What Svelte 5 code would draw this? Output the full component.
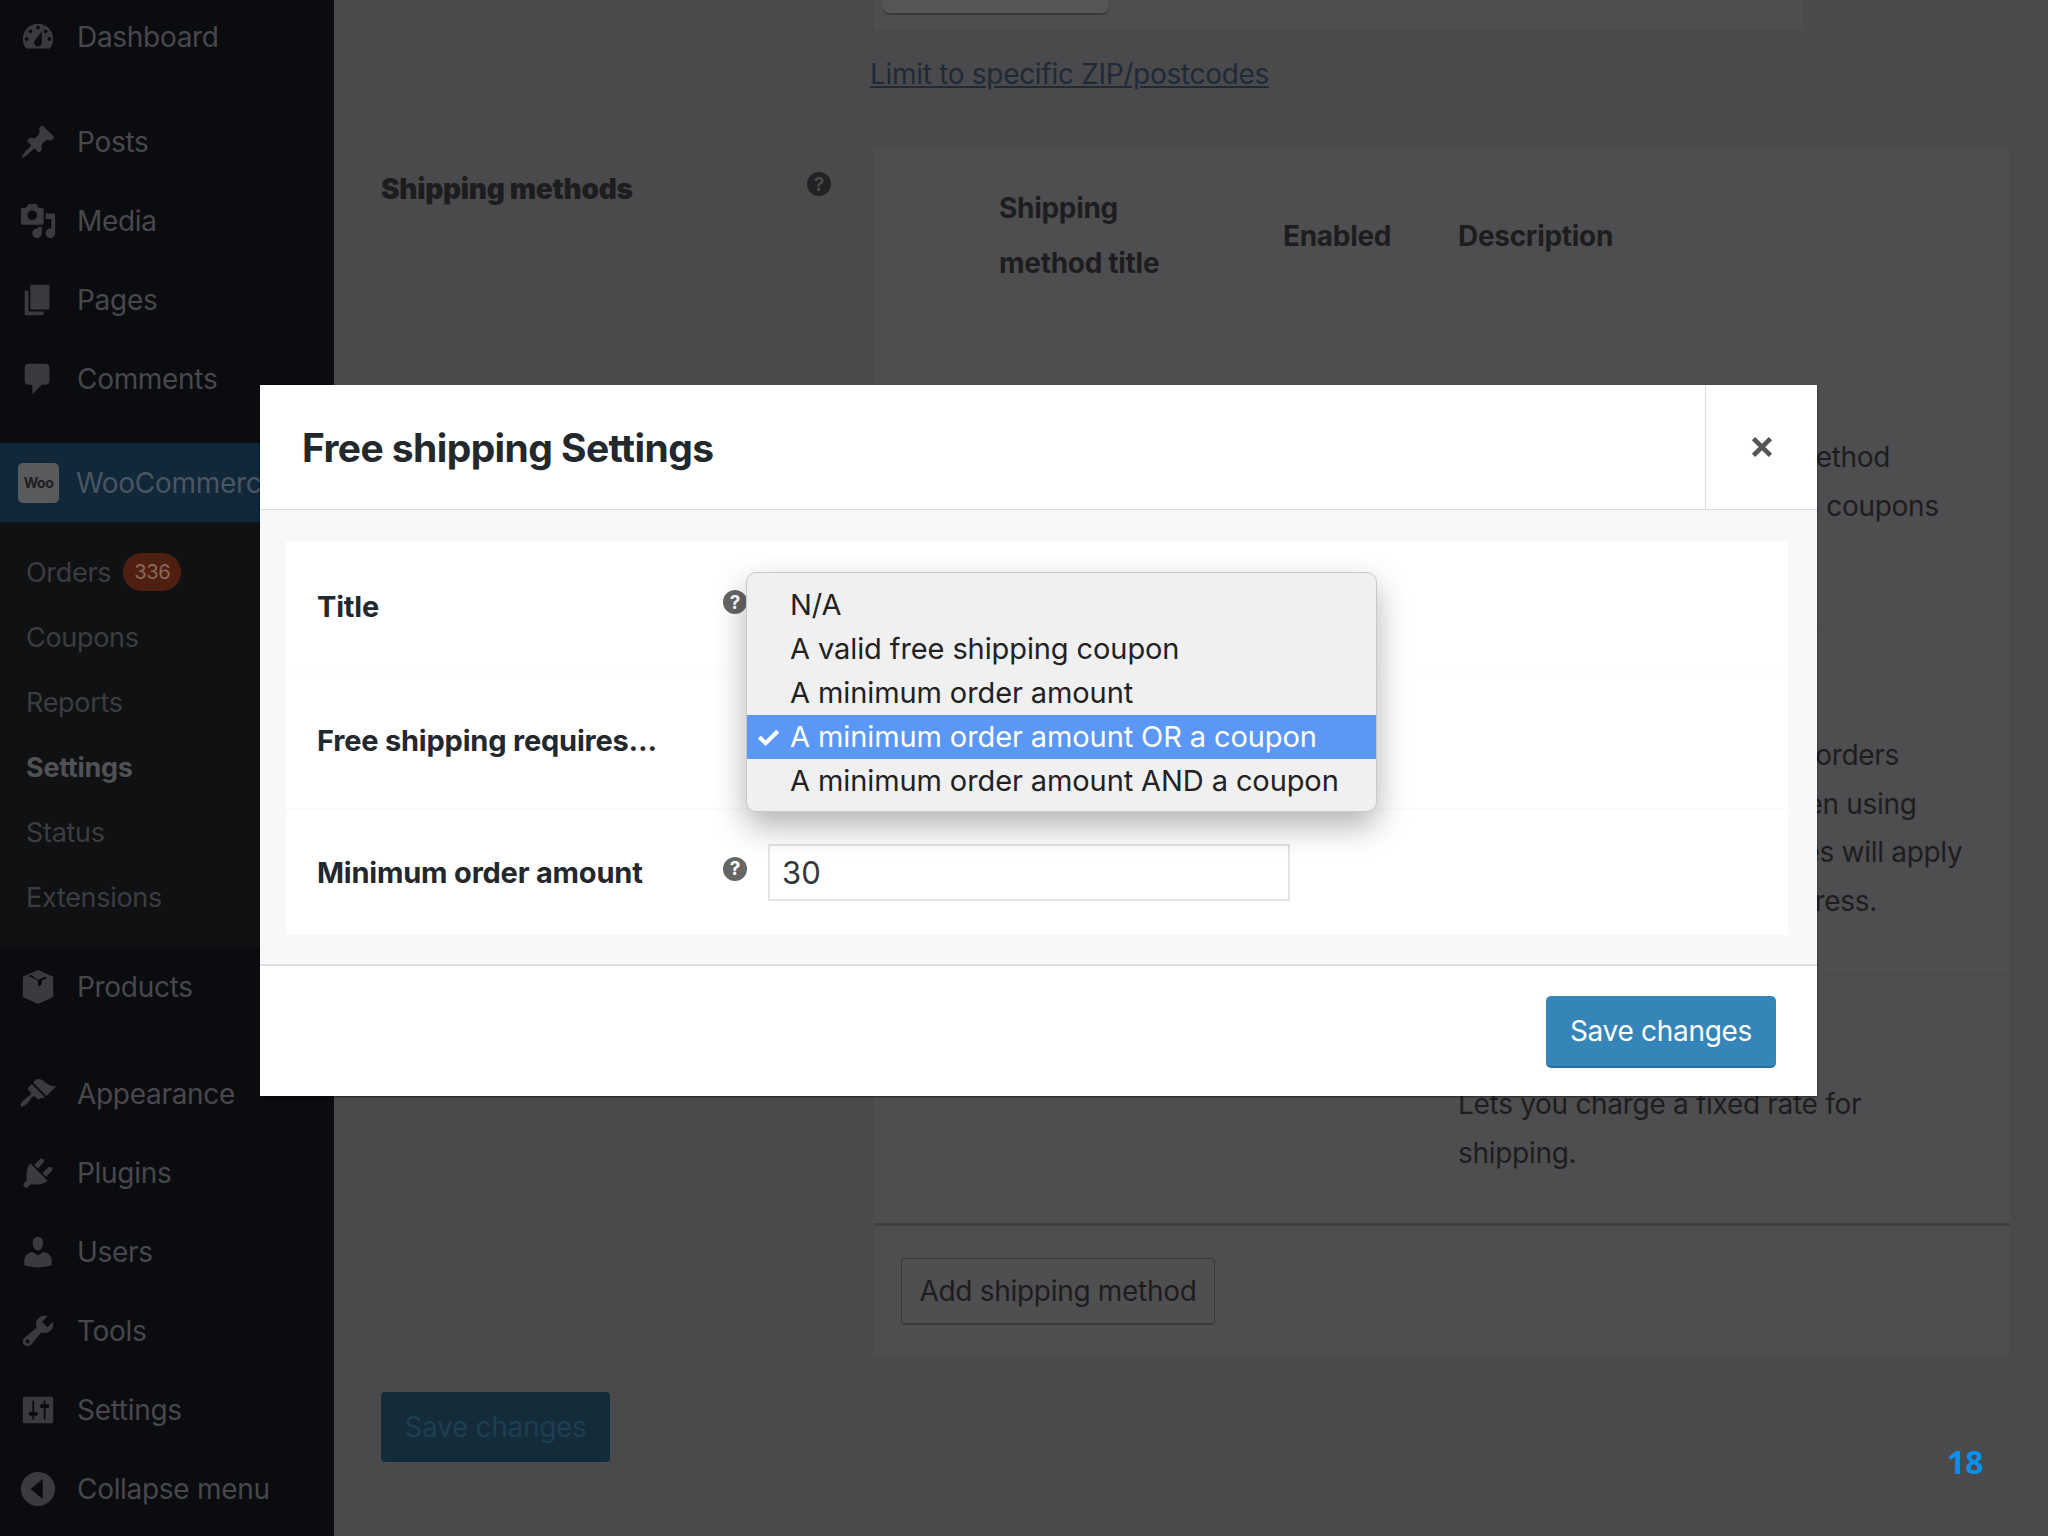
<script lang="ts">
  const icons: Record<string, string> = {
    dashboard:
      "M3.76 16h12.48c1.1-1.37 1.76-3.11 1.76-5 0-4.42-3.58-8-8-8s-8 3.58-8 8c0 1.89.66 3.63 1.76 5zM10 4c.55 0 1 .45 1 1s-.45 1-1 1-1-.45-1-1 .45-1 1-1zM6 6c.55 0 1 .45 1 1s-.45 1-1 1-1-.45-1-1 .45-1 1-1zm8 0c.55 0 1 .45 1 1s-.45 1-1 1-1-.45-1-1 .45-1 1-1zm-5.37 5.55L12 7v6c0 1.1-.9 2-2 2s-2-.9-2-2c0-.57.24-1.08.63-1.45zM4 10c.55 0 1 .45 1 1s-.45 1-1 1-1-.45-1-1 .45-1 1-1zm12 0c.55 0 1 .45 1 1s-.45 1-1 1-1-.45-1-1 .45-1 1-1z",
    posts:
      "M10.44 3.02l1.82-1.82 6.36 6.35-1.83 1.82c-1.05-.68-2.48-.57-3.41.36l-.75.75c-.92.93-1.04 2.35-.35 3.41l-1.83 1.82-2.41-2.41-2.8 2.79c-.42.42-3.38 2.71-3.8 2.29s1.86-3.39 2.28-3.81l2.79-2.79L4.1 9.36l1.83-1.82c1.05.69 2.48.57 3.4-.36l.75-.75c.93-.92 1.05-2.35.36-3.41z",
    media:
      "M13 11V4c0-.55-.45-1-1-1h-1.67L9 1H5L3.67 3H2c-.55 0-1 .45-1 1v7c0 .55.45 1 1 1h10c.55 0 1-.45 1-1zM7 4.5c1.38 0 2.5 1.12 2.5 2.5S8.38 9.5 7 9.5 4.5 8.38 4.5 7 5.62 4.5 7 4.5zM14 6h5v10.5c0 1.38-1.12 2.5-2.5 2.5S14 17.88 14 16.5s1.12-2.5 2.5-2.5c.17 0 .34.02.5.05V9h-3V6zm-4 8.05V13h2v3.5c0 1.38-1.12 2.5-2.5 2.5S7 17.88 7 16.5 8.12 14 9.5 14c.17 0 .34.02.5.05z",
    pages: "M6 15V2h10v13H6zm-1 1h8v2H3V5h2v11z",
    comments:
      "M5 2h9c1.1 0 2 .9 2 2v7c0 1.1-.9 2-2 2h-2l-5 5v-5H5c-1.1 0-2-.9-2-2V4c0-1.1.9-2 2-2z",
    products:
      "M10 1l8 3.6v10.6L10 19l-8-3.8V4.6zM6.2 3.6L5 4.2l5 2.4v3.2l2-1V6.6l2.9-1.4-1.2-.6L10 6.2z",
    appearance:
      "M14.48 11.06L7.41 3.99l1.5-1.5c.5-.56 2.3-.47 3.51.32 1.21.8 1.43 1.28 2.91 2.1 1.18.64 2.45 1.26 4.45.85zm-.71.71L6.7 4.7 4.93 6.47c-.39.39-.39 1.02 0 1.41l1.06 1.06c.39.39.39 1.03 0 1.42-.6.6-1.43 1.11-2.21 1.69-.35.26-.7.53-1.01.84-1.34 1.34-2.37 2.96-1.76 3.57.61.61 2.23-.42 3.58-1.77.31-.31.58-.66.84-1.01.58-.78 1.09-1.61 1.69-2.21.39-.39 1.02-.39 1.41 0l1.06 1.06c.39.39 1.02.39 1.41 0z",
    plugins:
      "M13.11 4.36L9.87 7.6 8 5.73l3.24-3.24c.35-.34 1.05-.2 1.56.32.52.51.66 1.21.31 1.55zm-8 1.77l.91-1.12 9.01 9.01-1.19.84c-.71.71-2.63 1.16-3.82 1.16H6.14L4.9 17.26c-.59.59-1.54.59-2.12 0-.59-.58-.59-1.53 0-2.12l1.24-1.24v-3.88c0-1.13.4-3.19 1.09-3.89zm7.26 3.97l3.24-3.24c.34-.35 1.04-.21 1.55.31.52.51.66 1.21.31 1.55l-3.24 3.25z",
    users:
      "M10 9.25c-2.27 0-2.73-3.44-2.73-3.44C7 4.02 7.82 2 9.97 2c2.16 0 2.98 2.02 2.71 3.81 0 0-.41 3.44-2.68 3.44zm0 2.57L12.72 10c2.39 0 4.52 2.33 4.52 4.53v2.49s-3.65 1.13-7.24 1.13c-3.65 0-7.24-1.13-7.24-1.13v-2.49c0-2.25 1.94-4.48 4.47-4.48z",
    tools:
      "M16.68 9.77c-1.34 1.34-3.3 1.67-4.95.99l-5.41 6.52c-.99.99-2.59.99-3.58 0s-.99-2.59 0-3.57l6.52-5.42c-.68-1.65-.35-3.61.99-4.95 1.28-1.28 3.12-1.62 4.72-1.06l-2.89 2.89 2.82 2.82 2.86-2.87c.53 1.58.18 3.39-1.08 4.65zM3.81 16.21c.4.39 1.04.39 1.43 0 .4-.4.4-1.04 0-1.43-.39-.4-1.03-.4-1.43 0-.39.39-.39 1.03 0 1.43z",
    settings:
      "M18 16V4c0-.55-.45-1-1-1H3c-.55 0-1 .45-1 1v12c0 .55.45 1 1 1h14c.55 0 1-.45 1-1zM8 11h1c.55 0 1 .45 1 1s-.45 1-1 1H8v1.5c0 .28-.22.5-.5.5s-.5-.22-.5-.5V13H6c-.55 0-1-.45-1-1s.45-1 1-1h1V5.5c0-.28.22-.5.5-.5s.5.22.5.5V11zm5-2h-1c-.55 0-1-.45-1-1s.45-1 1-1h1V5.5c0-.28.22-.5.5-.5s.5.22.5.5V7h1c.55 0 1 .45 1 1s-.45 1-1 1h-1v5.5c0 .28-.22.5-.5.5s-.5-.22-.5-.5V9z",
    collapse:
      "M10 1a9 9 0 1 1 0 18 9 9 0 0 1 0-18zm2.5 3.8L6 10l6.5 5.2z",
  };

  const topItems = [{ label: "Dashboard", icon: "dashboard" }];
  const contentItems = [
    { label: "Posts", icon: "posts" },
    { label: "Media", icon: "media" },
    { label: "Pages", icon: "pages" },
    { label: "Comments", icon: "comments" },
  ];
  const subItems = ["Coupons", "Reports", "Settings", "Status", "Extensions"];
  const adminItems = [
    { label: "Appearance", icon: "appearance" },
    { label: "Plugins", icon: "plugins" },
    { label: "Users", icon: "users" },
    { label: "Tools", icon: "tools" },
    { label: "Settings", icon: "settings" },
    { label: "Collapse menu", icon: "collapse" },
  ];
  const options = [
    "N/A",
    "A valid free shipping coupon",
    "A minimum order amount",
    "A minimum order amount OR a coupon",
    "A minimum order amount AND a coupon",
  ];
  const selected = 3;
</script>

{#snippet menuItem(item: { label: string; icon: string })}
  <div class="menu-item">
    <svg class="menu-icon" viewBox="0 0 20 20"><path fill-rule="evenodd" d={icons[item.icon]} /></svg>
    <span>{item.label}</span>
  </div>
{/snippet}

{#snippet help()}
  <span class="help">?</span>
{/snippet}

<div class="screen">
  <aside class="sidebar">
    <div class="group-first">
      {#each topItems as item}{@render menuItem(item)}{/each}
    </div>
    <div class="group">
      {#each contentItems as item}{@render menuItem(item)}{/each}
    </div>

    <div class="woo-row">
      <span class="woo-logo">Woo</span>
      <span>WooCommerce</span>
    </div>
    <div class="submenu">
      <div class="sub-item">Orders <span class="badge">336</span></div>
      {#each subItems as sub}
        <div class="sub-item" class:current={sub === "Settings"}>{sub}</div>
      {/each}
    </div>

    {@render menuItem({ label: "Products", icon: "products" })}
    <div class="group">
      {#each adminItems as item}{@render menuItem(item)}{/each}
    </div>
  </aside>

  <main class="page">
    <div class="zip-card"><div class="zip-button"></div></div>
    <a class="zip-link" href="#zip">Limit to specific ZIP/postcodes</a>

    <section class="methods">
      <div class="methods-label">
        <strong>Shipping methods</strong>
        <span class="help help-dim">?</span>
      </div>
      <div class="methods-table">
        <div class="table-head">
          <div class="col-title">Shipping<br />method title</div>
          <div class="col-enabled">Enabled</div>
          <div class="col-desc">Description</div>
        </div>
        <div class="table-row row-free">
          <p>Free shipping is a special method<br />which can be triggered with coupons<br />and minimum spends.</p>
        </div>
        <div class="table-row row-pickup">
          <p>Allow customers to pick up orders<br />themselves. By default, when using<br />local pickup store base taxes will apply<br />regardless of customer address.</p>
        </div>
        <div class="table-row row-flat">
          <p>Lets you charge a fixed rate for<br />shipping.</p>
        </div>
        <div class="table-foot">
          <button class="add-method">Add shipping method</button>
        </div>
      </div>
    </section>

    <button class="page-save">Save changes</button>
  </main>

  <div class="page-number">18</div>

  <div class="modal">
    <header class="modal-head">
      <h1>Free shipping Settings</h1>
      <div class="modal-close">
        <svg viewBox="0 0 20 20" width="26" height="26"><path d="M3.5 3.5l13 13M16.5 3.5l-13 13" stroke="#555" stroke-width="3.6" fill="none" /></svg>
      </div>
    </header>

    <div class="modal-body">
      <div class="form-card">
        <div class="form-row row-a">
          <div class="form-label">Title</div>
          {@render help()}
        </div>
        <div class="form-row row-b">
          <div class="form-label">Free shipping requires...</div>
        </div>
        <div class="form-row row-c">
          <div class="form-label">Minimum order amount</div>
          {@render help()}
          <input class="amount" value="30" />
        </div>
      </div>

      <div class="dropdown">
        {#each options as option, i}
          <div class="option" class:active={i === selected}>
            {#if i === selected}<span class="check">✓</span>{/if}
            {option}
          </div>
        {/each}
      </div>
    </div>

    <footer class="modal-foot">
      <button class="save">Save changes</button>
    </footer>
  </div>
</div>

<style>
  :global(body) {
    margin: 0;
    background: #4a494b;
  }

  .screen {
    position: relative;
    width: 2048px;
    height: 1536px;
    overflow: hidden;
    display: flex;
    font-family: Inter, "Liberation Sans", sans-serif;
  }

  /* sidebar */
  .sidebar {
    width: 334px;
    flex-shrink: 0;
    background: #0b0c10;
    color: #48484c;
    font-size: 28px;
    letter-spacing: -0.3px;
  }

  .group-first .menu-item {
    height: 74px;
  }

  .group {
    padding: 28.5px 0 24.5px;
  }

  .menu-item {
    height: 79px;
    display: flex;
    align-items: center;
    gap: 20px;
    padding-left: 19px;
  }

  .menu-icon {
    width: 38px;
    height: 38px;
    fill: #3b3b3f;
    flex-shrink: 0;
  }

  .woo-row {
    height: 79px;
    display: flex;
    align-items: center;
    padding-left: 18px;
    gap: 17px;
    background: #11273a;
    color: #4a5560;
    white-space: nowrap;
    overflow: hidden;
  }

  .woo-logo {
    width: 41px;
    height: 40px;
    border-radius: 5px;
    background: #5a5a5c;
    color: #1c2024;
    font-size: 14px;
    font-weight: 700;
    letter-spacing: -0.5px;
    display: flex;
    align-items: center;
    justify-content: center;
    flex-shrink: 0;
  }

  .submenu {
    background: #101113;
    padding: 17.5px 0 17.5px 26px;
    font-size: 27px;
    color: #3c3d40;
  }

  .sub-item {
    height: 65px;
    display: flex;
    align-items: center;
    gap: 12px;
  }

  .sub-item.current {
    color: #505155;
    font-weight: 700;
  }

  .badge {
    background: #4f2011;
    color: #8a6a5e;
    font-size: 20px;
    height: 38px;
    padding: 0 11px;
    border-radius: 19px;
    display: flex;
    align-items: center;
  }

  /* dimmed settings page */
  .page {
    flex: 1;
    padding-left: 47px;
    color: #1d1d1f;
    font-size: 28px;
    letter-spacing: -0.3px;
  }

  .zip-card {
    margin-left: 493px;
    width: 929px;
    height: 30px;
    background: #4e4e50;
  }

  .zip-button {
    margin-left: 9px;
    width: 225px;
    height: 13px;
    background: #565755;
    border-radius: 0 0 6px 6px;
    box-shadow: 0 2px 0 #3a3a3a;
  }

  .zip-link {
    display: block;
    margin: 27px 0 0 489px;
    line-height: 34px;
    width: fit-content;
    color: #1f2a38;
  }

  .methods {
    display: flex;
    margin-top: 57px;
  }

  .methods-label {
    width: 493px;
    flex-shrink: 0;
    display: flex;
    justify-content: space-between;
    align-items: flex-start;
    padding: 24px 43px 0 0;
    box-sizing: border-box;
    font-weight: 700;
  }

  .methods-table {
    width: 1136px;
    height: 1208px;
    background: #4e4d4f;
    display: flex;
    flex-direction: column;
  }

  .table-head {
    height: 176px;
    display: flex;
    align-items: center;
    margin-bottom: 4px;
    font-weight: 700;
    line-height: 55px;
    border-bottom: 1px solid #49484a;
  }

  .col-title {
    width: 284px;
    padding-left: 125px;
    box-sizing: border-box;
    white-space: nowrap;
    margin-right: 125px;
  }

  .col-enabled {
    width: 175px;
  }

  .table-row p {
    margin: 0 0 0 584px;
    line-height: 48.5px;
    white-space: nowrap;
  }

  .row-free {
    height: 299px;
    padding-top: 104px;
    box-sizing: border-box;
    border-bottom: 1px solid #49484a;
  }

  .row-pickup {
    height: 348px;
    padding-top: 103px;
    box-sizing: border-box;
    border-bottom: 1px solid #49484a;
  }

  .row-flat {
    height: 250px;
    padding-top: 104px;
    box-sizing: border-box;
    border-bottom: 3px solid #3f3e40;
  }

  .table-foot {
    padding: 32px 0 0 27px;
  }

  .add-method {
    width: 314px;
    height: 67px;
    background: #4f4e50;
    border: 1px solid #39383a;
    border-bottom-width: 2px;
    border-radius: 4px;
    color: #1d1d1f;
    font: inherit;
    letter-spacing: inherit;
    padding: 0;
  }

  .page-save {
    display: block;
    margin-top: 36px;
    width: 229px;
    height: 70px;
    background: #142b39;
    color: #1f3e50;
    border: 0;
    border-radius: 4px;
    font: inherit;
    letter-spacing: inherit;
    padding: 0;
  }

  .page-number {
    position: absolute;
    left: 1947px;
    top: 1440px;
    font-family: "Open Sans", sans-serif;
    font-weight: 700;
    font-size: 32px;
    line-height: 44px;
    color: #0a90e8;
  }

  /* modal */
  .modal {
    position: absolute;
    left: 260px;
    top: 385px;
    width: 1557px;
    height: 711px;
    background: #fff;
    display: flex;
    flex-direction: column;
    box-shadow: 0 1px 2px rgba(0, 0, 0, 0.5);
  }

  .modal-head {
    height: 124px;
    flex-shrink: 0;
    display: flex;
    justify-content: space-between;
    align-items: stretch;
    border-bottom: 1px solid #dcdcde;
  }

  .modal-head h1 {
    margin: 0;
    padding-left: 42px;
    align-self: center;
    font-size: 39px;
    font-weight: 700;
    letter-spacing: -0.6px;
    color: #23282d;
  }

  .modal-close {
    width: 111px;
    border-left: 1px solid #dcdcde;
    display: flex;
    align-items: center;
    justify-content: center;
  }

  .modal-body {
    position: relative;
    height: 454px;
    flex-shrink: 0;
    box-sizing: border-box;
    padding: 31px 29px 29px 26px;
    background: #f8f8f9;
  }

  .form-card {
    background: #fff;
  }

  .form-row {
    display: flex;
    align-items: center;
    padding-left: 31px;
    color: #23282d;
    font-size: 29px;
    letter-spacing: -0.2px;
    box-sizing: border-box;
    border-bottom: 2px solid #fbfbfc;
  }

  .form-row .help {
    margin-left: 0;
  }

  .row-a {
    height: 132px;
  }

  .row-b {
    height: 137px;
  }

  .row-c {
    height: 125px;
    border-bottom: 0;
  }

  .form-label {
    width: 406px;
    font-weight: 700;
  }

  .help {
    width: 24px;
    height: 24px;
    border-radius: 50%;
    background: #666;
    color: #fff;
    font-size: 19px;
    font-weight: 700;
    letter-spacing: 0;
    display: flex;
    align-items: center;
    justify-content: center;
    flex-shrink: 0;
    margin-bottom: 8px;
  }

  .help-dim {
    background: #222224;
    color: #4a494b;
  }

  .amount {
    margin-left: 21px;
    width: 522px;
    height: 57px;
    box-sizing: border-box;
    padding: 0 12px;
    border: 2px solid #e4e4e6;
    background: #fff;
    font: inherit;
    font-size: 31px;
    color: #32373c;
  }

  .dropdown {
    position: absolute;
    left: 486px;
    top: 62px;
    width: 631px;
    height: 240px;
    box-sizing: border-box;
    padding: 10px 0;
    background: #f0f0f1;
    border: 1px solid #c8c8ca;
    border-radius: 10px;
    box-shadow: 0 14px 32px rgba(0, 0, 0, 0.3);
    font-size: 29px;
    letter-spacing: -0.1px;
    color: #222;
  }

  .option {
    position: relative;
    height: 44px;
    line-height: 44px;
    padding-left: 43px;
    white-space: nowrap;
  }

  .option.active {
    background: #5b97f5;
    color: #fff;
  }

  .check {
    position: absolute;
    left: 8px;
    font-weight: 700;
  }

  .modal-foot {
    flex: 1;
    display: flex;
    justify-content: flex-end;
    align-items: flex-start;
    padding: 30px 41px 0 0;
    border-top: 2px solid #dfdfe1;
    box-sizing: border-box;
  }

  .save {
    width: 230px;
    height: 72px;
    background: #3585b8;
    color: #fff;
    border: 0;
    border-bottom: 2px solid #28709f;
    border-radius: 5px;
    font-family: inherit;
    font-size: 28px;
    letter-spacing: -0.3px;
    padding: 0;
  }
</style>
